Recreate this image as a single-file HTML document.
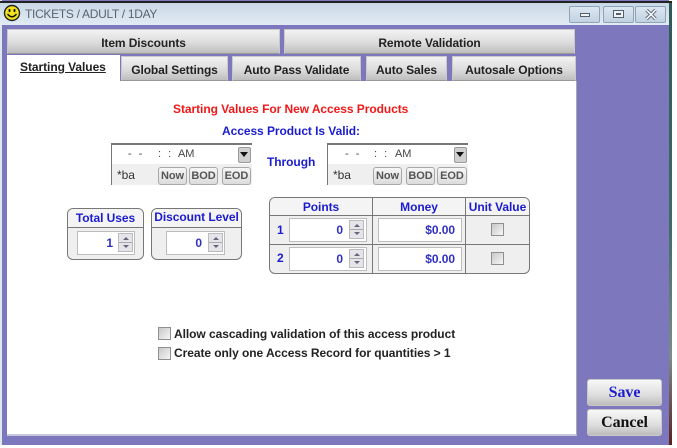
<!DOCTYPE html>
<html>
<head>
<meta charset="utf-8">
<style>
html,body{margin:0;padding:0;background:#fff;}
body{width:677px;height:448px;overflow:hidden;position:relative;font-family:"Liberation Sans",sans-serif;font-weight:bold;font-size:12px;color:#222;letter-spacing:-0.06px;}
.a{position:absolute;box-sizing:border-box;}
.t{position:absolute;white-space:nowrap;line-height:14px;}
.tab{position:absolute;box-sizing:border-box;background:linear-gradient(#f2f2f2,#dcdcdc 55%,#bdbdbd);border:1px solid #c9c9c9;border-bottom-color:#999;text-align:center;color:#222;white-space:nowrap;letter-spacing:-0.1px;}
.blue{color:#1c1ccf;}
.inp{position:absolute;box-sizing:border-box;background:#fff;border:1px solid #bdbdbd;text-align:right;color:#3030c0;font-size:12px;}
.sp{position:absolute;box-sizing:border-box;width:15px;height:19px;border:1px solid #bbb;background:#e4e4ea;}
.sp:before{content:"";position:absolute;left:0;right:0;top:8px;height:1px;background:#aaa;}
.sp i{position:absolute;left:4px;width:0;height:0;border-left:3px solid transparent;border-right:3px solid transparent;}
.sp i.u{top:3px;border-bottom:3px solid #667;}
.sp i.d{top:11px;border-top:3px solid #667;}
.cb{position:absolute;box-sizing:border-box;width:13px;height:13px;border:1px solid #8f8f8f;background:linear-gradient(135deg,#c8c8c8,#f6f6f6);}
.btn{position:absolute;box-sizing:border-box;top:22px;height:18px;border:1px solid #a8a8a8;border-radius:3px;background:linear-gradient(#f6f6f6,#dcdcdc);font-size:11px;line-height:16px;text-align:center;color:#555;}
.dt{position:absolute;box-sizing:border-box;width:141px;height:42px;border-top:2px solid #777;border-left:1px solid #777;background:linear-gradient(#fff 0,#fff 19px,#efefef 19px);}
.wb{position:absolute;box-sizing:border-box;top:6px;height:17px;border:1px solid #90a4b8;border-radius:2px;background:linear-gradient(#dbe6f0,#c2d2e2);}
.big{position:absolute;box-sizing:border-box;left:587px;width:75px;border:1px solid #c8c8c8;border-radius:3px;background:linear-gradient(#f8f8f8,#dedede 60%,#bcbcbc);text-align:center;font-family:"Liberation Serif",serif;font-size:16px;}
.dd{position:absolute;left:126px;top:2px;width:13px;height:16px;box-sizing:border-box;background:#d0d0d0;border:1px solid #999;border-radius:2px;}
.dd:after{content:"";position:absolute;left:1px;top:4px;width:0;height:0;border-left:4.5px solid transparent;border-right:4.5px solid transparent;border-top:5px solid #111;}
.tm{position:absolute;top:2px;line-height:14px;font-size:11px;font-weight:normal;color:#444;white-space:nowrap;}
</style>
</head>
<body>
<!-- window -->
<div class="a" style="left:0;top:0;width:669px;height:445px;background:#7d78bd;border-left:2px solid #dfe7ef;"></div>
<div class="a" style="left:669px;top:2px;width:3px;height:443px;background:linear-gradient(#2d5a56,#3f6a66 50%,#7d8d8a 80%,#5c2020);"></div>
<div class="a" style="left:0;top:1px;width:672px;height:2px;background:#222;"></div>
<div class="a" style="left:0;top:3px;width:669px;height:22px;background:linear-gradient(#c9d8e6,#e2ebf3);"></div>

<!-- smiley -->
<svg class="a" style="left:3px;top:4px;" width="18" height="18" viewBox="0 0 18 18">
<circle cx="9" cy="9" r="7.5" fill="#f2e21a" stroke="#222" stroke-width="1.4"/>
<ellipse cx="6.5" cy="6.5" rx="1" ry="1.6" fill="#111"/>
<ellipse cx="11.5" cy="6.5" rx="1" ry="1.6" fill="#111"/>
<path d="M4.5 10 Q9 15.5 13.5 10" fill="none" stroke="#111" stroke-width="1.4"/>
</svg>
<div class="t" style="left:25px;top:7px;font-weight:normal;font-size:12px;color:#5b6570;letter-spacing:-0.3px;">TICKETS / ADULT / 1DAY</div>

<!-- window buttons -->
<div class="wb" style="left:569px;width:31px;"><div class="a" style="left:10px;top:6px;width:10px;height:4px;background:#eef3f8;border:1px solid #55606c;"></div></div>
<div class="wb" style="left:603px;width:31px;"><div class="a" style="left:9px;top:3px;width:11px;height:8px;border:1px solid #55606c;background:#eef3f8;"><div class="a" style="left:2px;top:2px;width:5px;height:2px;background:#55606c;"></div></div></div>
<div class="wb" style="left:635px;width:31px;"><svg class="a" style="left:8px;top:1px;" width="14" height="13" viewBox="0 0 14 13"><path d="M2.5 2 L11.5 11 M11.5 2 L2.5 11" stroke="#55606c" stroke-width="3.4"/><path d="M2.5 2 L11.5 11 M11.5 2 L2.5 11" stroke="#f2f5f8" stroke-width="1.6"/></svg></div>

<!-- content -->
<div class="a" style="left:7px;top:81px;width:570px;height:355px;background:#fff;border-right:1px solid #aaa;border-bottom:2px solid #c8c8dc;"></div>

<!-- tabs -->
<div class="tab" style="left:7px;top:29px;width:273px;height:25px;line-height:26px;">Item Discounts</div>
<div class="tab" style="left:284px;top:29px;width:291px;height:25px;line-height:26px;">Remote Validation</div>
<div class="a" style="left:7px;top:55px;width:113px;height:27px;background:#fff;"></div>
<div class="t" style="left:20px;top:60px;text-decoration:underline;">Starting Values</div>
<div class="tab" style="left:121px;top:56px;width:107px;height:25px;line-height:27px;">Global Settings</div>
<div class="tab" style="left:232px;top:56px;width:129px;height:25px;line-height:27px;">Auto Pass Validate</div>
<div class="tab" style="left:366px;top:56px;width:81px;height:25px;line-height:27px;">Auto Sales</div>
<div class="tab" style="left:452px;top:56px;width:124px;height:25px;line-height:27px;">Autosale Options</div>

<!-- headings -->
<div class="t" style="left:173px;top:102px;color:#f01818;">Starting Values For New Access Products</div>
<div class="t" style="left:222px;top:124px;color:#1c1ccf;">Access Product Is Valid:</div>
<div class="t blue" style="left:267px;top:155px;">Through</div>

<!-- date 1 -->
<div class="dt" style="left:111px;top:143px;">
  <div class="tm" style="left:16px;letter-spacing:2px;">- -</div>
  <div class="tm" style="left:46px;letter-spacing:2px;">: :</div>
  <div class="tm" style="left:66px;">AM</div>
  <div class="dd"></div>
  <div class="t" style="left:5px;top:23px;font-weight:normal;color:#333;">*ba</div>
  <div class="btn" style="left:46px;width:29px;">Now</div>
  <div class="btn" style="left:77px;width:29px;">BOD</div>
  <div class="btn" style="left:110px;width:29px;">EOD</div>
</div>
<!-- date 2 -->
<div class="dt" style="left:327px;top:143px;">
  <div class="tm" style="left:17px;letter-spacing:2px;">- -</div>
  <div class="tm" style="left:46px;letter-spacing:2px;">: :</div>
  <div class="tm" style="left:67px;">AM</div>
  <div class="dd"></div>
  <div class="t" style="left:5px;top:23px;font-weight:normal;color:#333;">*ba</div>
  <div class="btn" style="left:45px;width:29px;">Now</div>
  <div class="btn" style="left:78px;width:29px;">BOD</div>
  <div class="btn" style="left:109px;width:30px;">EOD</div>
</div>

<!-- total uses -->
<div class="a" style="left:67px;top:208px;width:77px;height:52px;border:1px solid #777;border-radius:6px;background:#efefef;overflow:hidden;">
  <div class="a" style="left:0;top:0;width:75px;height:19px;background:#f4f4f4;border-bottom:1px solid #777;text-align:center;line-height:18px;color:#1c1ccf;">Total Uses</div>
  <div class="inp" style="left:9px;top:22px;width:58px;height:24px;padding-right:21px;line-height:22px;">1</div>
  <div class="sp" style="left:50px;top:24px;"><i class="u"></i><i class="d"></i></div>
</div>
<!-- discount level -->
<div class="a" style="left:151px;top:208px;width:91px;height:52px;border:1px solid #777;border-radius:6px;background:#efefef;overflow:hidden;">
  <div class="a" style="left:0;top:0;width:89px;height:19px;background:#f4f4f4;border-bottom:1px solid #777;text-align:center;line-height:16px;color:#1c1ccf;">Discount Level</div>
  <div class="inp" style="left:14px;top:22px;width:59px;height:24px;padding-right:22px;line-height:22px;">0</div>
  <div class="sp" style="left:56px;top:24px;"><i class="u"></i><i class="d"></i></div>
</div>

<!-- grid -->
<div class="a" style="left:269px;top:197px;width:261px;height:77px;border:1px solid #777;border-radius:6px;background:#efefef;overflow:hidden;">
  <div class="a" style="left:0;top:0;width:259px;height:17px;background:#f4f4f4;"></div>
  <div class="a" style="left:0;top:17px;width:259px;height:1px;background:#777;"></div>
  <div class="a" style="left:0;top:46px;width:259px;height:1px;background:#777;"></div>
  <div class="a" style="left:102px;top:0;width:1px;height:75px;background:#777;"></div>
  <div class="a" style="left:195px;top:0;width:1px;height:75px;background:#777;"></div>
  <div class="t blue" style="left:0;top:2px;width:102px;text-align:center;">Points</div>
  <div class="t blue" style="left:103px;top:2px;width:92px;text-align:center;">Money</div>
  <div class="t blue" style="left:196px;top:2px;width:63px;text-align:center;">Unit Value</div>

  <div class="t blue" style="left:7px;top:25px;">1</div>
  <div class="inp" style="left:19px;top:20px;width:78px;height:24px;padding-right:23px;line-height:22px;">0</div>
  <div class="sp" style="left:79px;top:22px;"><i class="u"></i><i class="d"></i></div>
  <div class="inp" style="left:108px;top:20px;width:84px;height:24px;padding-right:6px;line-height:22px;">$0.00</div>
  <div class="cb" style="left:221px;top:25px;"></div>

  <div class="t blue" style="left:7px;top:53px;">2</div>
  <div class="inp" style="left:19px;top:49px;width:78px;height:24px;padding-right:23px;line-height:22px;">0</div>
  <div class="sp" style="left:79px;top:51px;"><i class="u"></i><i class="d"></i></div>
  <div class="inp" style="left:108px;top:49px;width:84px;height:24px;padding-right:6px;line-height:22px;">$0.00</div>
  <div class="cb" style="left:221px;top:54px;"></div>
</div>

<!-- checkboxes -->
<div class="cb" style="left:158px;top:327px;"></div>
<div class="t" style="left:174px;top:327px;">Allow cascading validation of this access product</div>
<div class="cb" style="left:158px;top:347px;"></div>
<div class="t" style="left:174px;top:346px;">Create only one Access Record for quantities &gt; 1</div>

<!-- save/cancel -->
<div class="big" style="top:379px;height:27px;line-height:26px;color:#1c1ccf;">Save</div>
<div class="big" style="top:409px;height:27px;line-height:26px;color:#111;">Cancel</div>
</body>
</html>
